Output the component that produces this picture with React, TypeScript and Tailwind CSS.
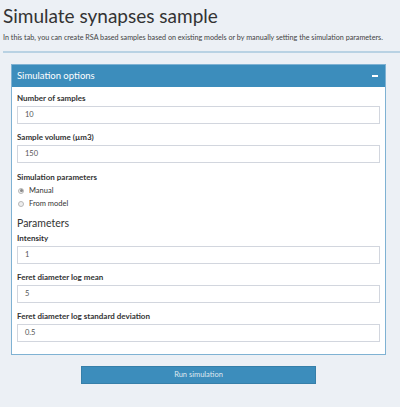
import React from 'react';

const font = { fontFamily: '"Source Sans Pro", Lato, "Liberation Sans", sans-serif' };

function Field({ label, value }: { label: string; value: string }) {
  return (
    <div className="flex flex-col">
      <label className="h-[10px] text-[8px] leading-[10px] font-bold text-[#333]">{label}</label>
      <div className="mt-[3px] h-[18px] border border-[#d2d6de] bg-white pl-[7px] flex items-center text-[7.5px] text-[#555]">
        {value}
      </div>
    </div>
  );
}

function Radio({ label, checked }: { label: string; checked?: boolean }) {
  return (
    <div className="h-[13px] flex items-center gap-[5px] pl-[1px]">
      <span className="w-[6px] h-[6px] rounded-full border border-[#b8b8b8] bg-[#eee] flex items-center justify-center">
        {checked && <span className="w-[3px] h-[3px] rounded-full bg-[#888]" />}
      </span>
      <span className="text-[7.5px] text-[#333]">{label}</span>
    </div>
  );
}

export default function App() {
  return (
    <div className="w-[400px] h-[407px] bg-[#ecf0f5] text-[#333] overflow-hidden" style={font}>
      <div className="pl-[3px] pt-[3px]">
        <h1 className="h-[25px] text-[19px] leading-[25px] text-[#333]">Simulate synapses sample</h1>
        <p className="mt-[4px] h-[12px] text-[7.2px] leading-[12px] text-[#444] whitespace-nowrap">
          In this tab, you can create RSA based samples based on existing models or by manually setting the simulation parameters.
        </p>
        <div className="mt-[7px] h-[2px] bg-[#b9d2e3]" />
      </div>

      <div className="ml-[11px] mt-[11px] w-[375px] border border-[#7fb2d3] bg-white">
        <div className="h-[22px] bg-[#3c8dbc] flex items-center justify-between pl-[5px] pr-[7px]">
          <span className="text-[9.5px] text-white">Simulation options</span>
          <span className="w-[6px] h-[2px] bg-white" />
        </div>
        <div className="px-[5px] pt-[6px] pb-[12px] flex flex-col">
          <Field label="Number of samples" value="10" />
          <div className="mt-[8px]">
            <Field label="Sample volume (µm3)" value="150" />
          </div>
          <div className="mt-[9px] h-[10px] text-[8px] leading-[10px] font-bold">Simulation parameters</div>
          <div className="mt-[2px] flex flex-col">
            <Radio label="Manual" checked />
            <Radio label="From model" />
          </div>
          <div className="mt-[6px] h-[14px] text-[10.5px] leading-[14px] text-[#333]">Parameters</div>
          <div className="mt-[3px]">
            <Field label="Intensity" value="1" />
          </div>
          <div className="mt-[8px]">
            <Field label="Feret diameter log mean" value="5" />
          </div>
          <div className="mt-[8px]">
            <Field label="Feret diameter log standard deviation" value="0.5" />
          </div>
        </div>
      </div>

      <button className="ml-[81px] mt-[11px] w-[235px] h-[18px] bg-[#3c8dbc] border border-[#367fa9] text-[7.5px] text-[#dfe8f0] flex items-center justify-center">
        Run simulation
      </button>
    </div>
  );
}
